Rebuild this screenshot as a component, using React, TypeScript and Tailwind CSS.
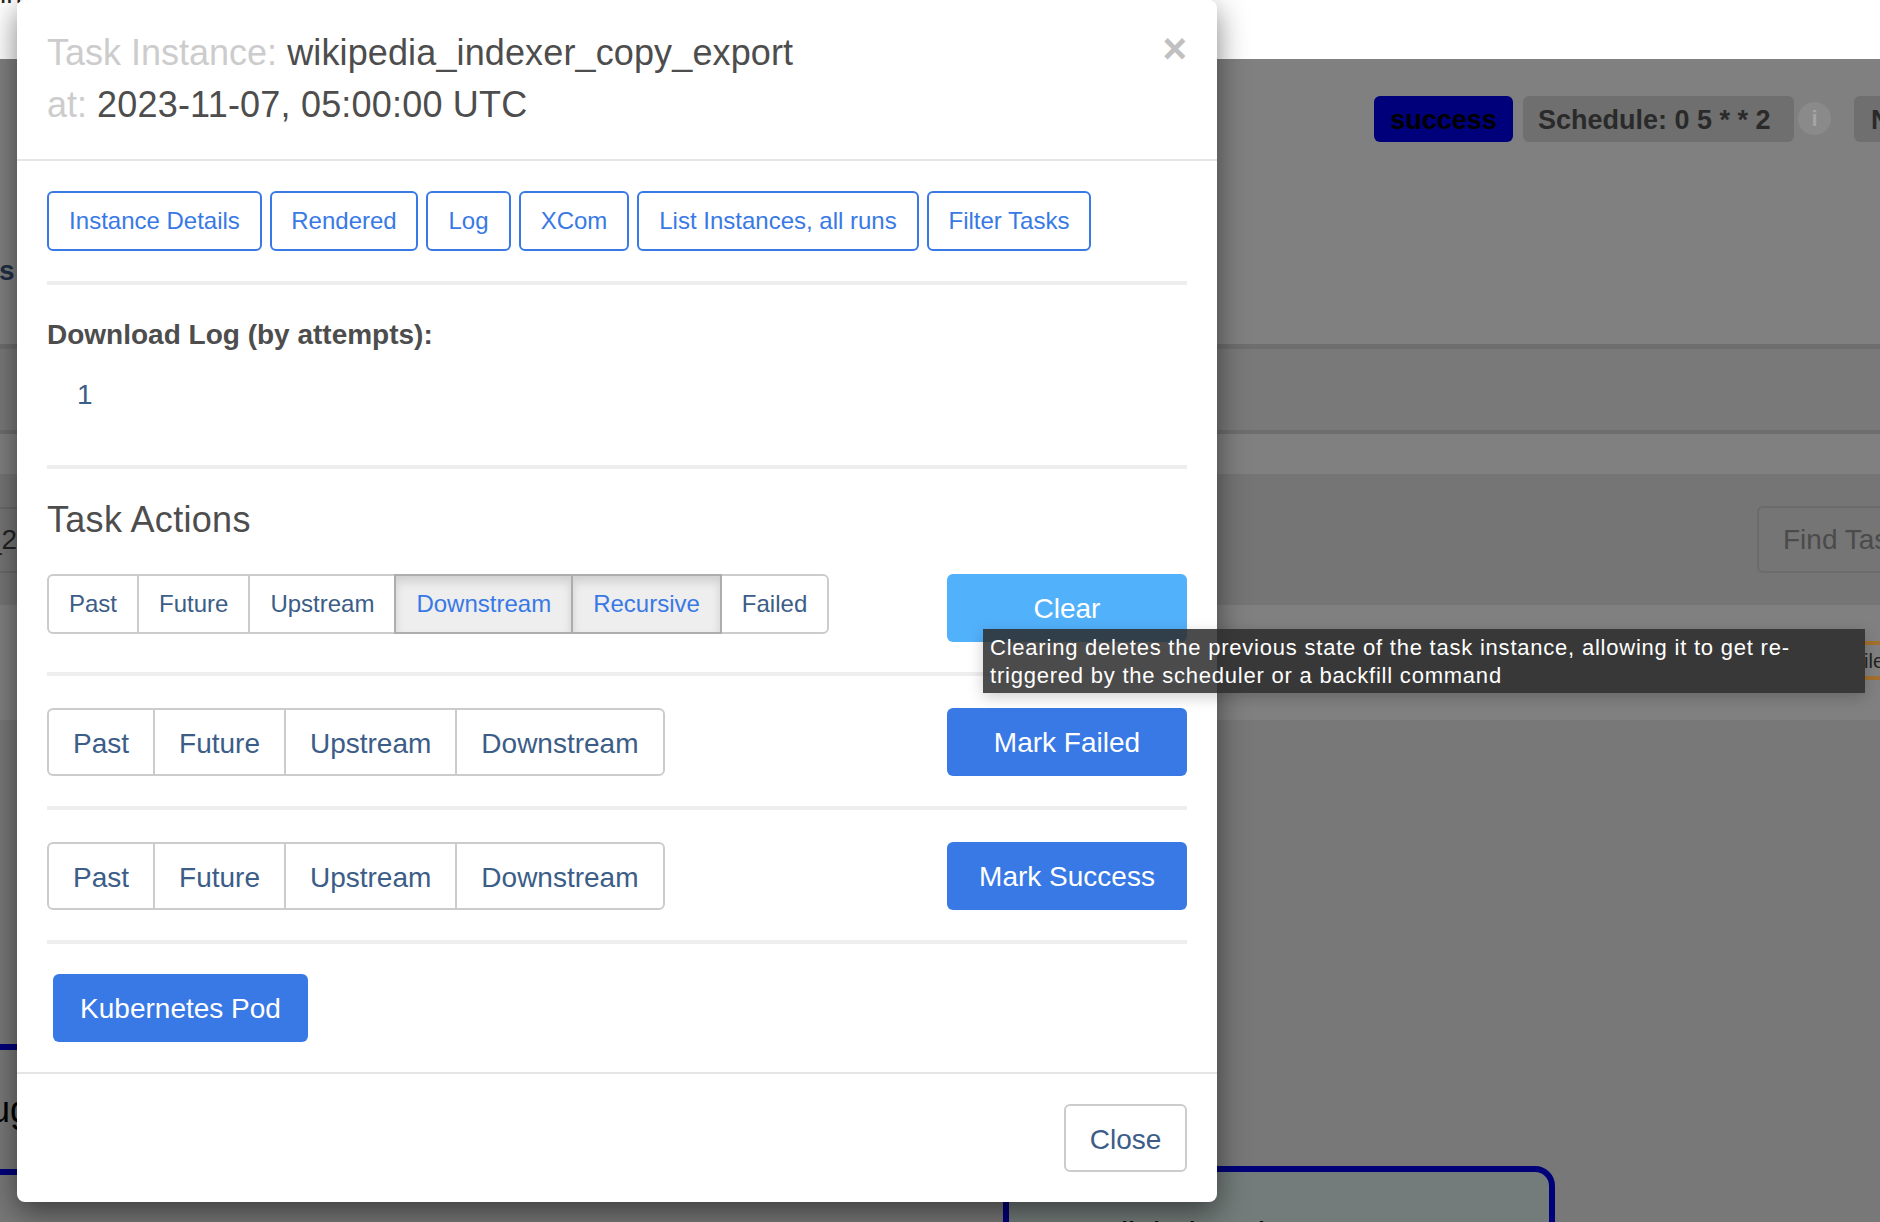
import React from "react";

const font = { fontFamily: '"Liberation Sans", Arial, sans-serif' };

function Hr({ className = "" }: { className?: string }) {
  return <div className={`h-1 bg-[#eeeeee] ${className}`} />;
}

type Seg = { label: string; active?: boolean };

function Group({ items, large }: { items: Seg[]; large?: boolean }) {
  const size = large ? "h-[68px] px-6 pt-[3px] text-[28px]" : "h-[60px] px-5 text-[24px]";
  return (
    <div className="flex">
      {items.map((it, i) => {
        const first = i === 0;
        const last = i === items.length - 1;
        return (
          <button
            key={it.label}
            className={`${size} relative border-2 leading-none ${first ? "rounded-l-md" : "-ml-0.5"} ${last ? "rounded-r-md" : ""} ${
              it.active
                ? "z-10 border-[#adadad] bg-[#eeeeee] text-[#3879e6] shadow-[inset_0_6px_10px_rgba(0,0,0,0.125)]"
                : "border-[#cccccc] bg-white text-[#3b5d87]"
            }`}
          >
            {it.label}
          </button>
        );
      })}
    </div>
  );
}

function Tab({ label, className }: { label: string; className: string }) {
  return (
    <button className={`h-[60px] rounded-md border-2 border-[#3879e6] bg-white text-[24px] leading-none text-[#3879e6] ${className}`}>
      {label}
    </button>
  );
}

function Primary({ label, className = "" }: { label: string; className?: string }) {
  return (
    <button className={`h-[68px] rounded-md bg-[#3879e6] pt-[2px] text-[28px] leading-none text-white ${className}`}>
      {label}
    </button>
  );
}

function Background() {
  return (
    <div className="flex h-[1222px] flex-col">
      <div className="h-[59px] overflow-hidden bg-white">
        <div className="-mt-[22px] text-[28px] leading-[32px] text-[#222222]">in</div>
      </div>
      <div className="flex h-[285px] justify-between bg-[#808080]">
        <div className="-ml-px mt-[196px] text-[28px] font-bold leading-8 text-[#1f2f45]">s</div>
        <div className="-mr-[40px] mt-[37px] flex h-[46px] items-start gap-[10px] text-[27px] font-bold leading-[48px]">
          <div className="h-[46px] w-[139px] rounded-md bg-[#00007a] text-center text-black">success</div>
          <div className="h-[46px] w-[271px] rounded-md bg-[#6f6f6f] pl-[15px] text-[#2a2a2a]">Schedule: 0 5 * * 2</div>
          <div className="-ml-[6px] mt-[6px] flex h-[33px] w-[33px] items-center justify-center rounded-full bg-[#8a8a8a] text-[22px] font-bold leading-none text-[#a5a5a5]">
            i
          </div>
          <div className="ml-[13px] h-[46px] w-[66px] rounded-md bg-[#6f6f6f] pl-[17px] text-[#2a2a2a]">N</div>
        </div>
      </div>
      <div className="h-[5px] bg-[#6e6e6e]" />
      <div className="h-[81px] bg-[#797979]" />
      <div className="h-1 bg-[#6e6e6e]" />
      <div className="h-10 bg-[#808080]" />
      <div className="flex h-[131px] items-center justify-between bg-[#757575]">
        <div className="-ml-[14px] flex h-[66px] w-[40px] items-center border-y-2 border-[#6a6a6a] text-[28px] text-[#222222]">
          _2
        </div>
        <div className="-mr-[20px] flex h-[67px] w-[143px] items-center overflow-hidden whitespace-nowrap rounded-md border-2 border-[#6b6b6b] pl-[24px] pt-[1px] text-[28px] text-[#4b4b4b]">
          Find Task
        </div>
      </div>
      <div className="h-[115px] bg-[#808080]" />
      <div className="relative flex-1 bg-[#787878]">
        <div className="absolute -left-[20px] top-[324px] flex h-[131px] w-[50px] items-center justify-end border-y-[6px] border-[#00007a] text-[36px] text-black">
          ug
        </div>
        <div className="absolute left-[1003px] top-[446px] h-[100px] w-[552px] rounded-t-[20px] border-[6px] border-[#00007a] bg-[#737c7a] pl-[112px] pt-[43px] text-[32px] leading-9 text-black">
          ll_index_data
        </div>
      </div>
    </div>
  );
}

export default function App() {
  const top: Seg[] = [
    { label: "Past" },
    { label: "Future" },
    { label: "Upstream" },
    { label: "Downstream", active: true },
    { label: "Recursive", active: true },
    { label: "Failed" },
  ];
  const rest: Seg[] = [{ label: "Past" }, { label: "Future" }, { label: "Upstream" }, { label: "Downstream" }];
  return (
    <div className="relative h-[1222px] w-[1880px] overflow-hidden" style={font}>
      <Background />

      <div className="absolute right-0 top-[641px] flex h-[39px] w-4 items-center overflow-hidden whitespace-nowrap border-y-4 border-[#a3702c] bg-[#808080] text-[20px] text-[#222222]">
        iled
      </div>

      <div className="absolute left-[17px] top-0 flex h-[1202px] w-[1200px] flex-col rounded-lg bg-white shadow-[0_10px_30px_rgba(0,0,0,0.5)]">
        <div className="relative h-[161px] border-b-2 border-[#e5e5e5] px-[30px] pt-[27px] text-[36px] leading-[52px] text-[#4d4d4d]">
          <div>
            <span className="text-[#cccccc]">Task Instance:</span> <span className="tracking-[0.13px]">wikipedia_indexer_copy_export</span>
          </div>
          <div>
            <span className="text-[#cccccc]">at:</span> <span className="tracking-[0.2px]">2023-11-07, 05:00:00 UTC</span>
          </div>
          <button className="absolute right-[30px] top-[28px] text-[42px] font-bold leading-none text-[#c0c0c0]">×</button>
        </div>

        <div className="flex flex-1 flex-col px-[30px] pt-[30px]">
          <div className="flex gap-2">
            <Tab label="Instance Details" className="w-[215px]" />
            <Tab label="Rendered" className="w-[148px]" />
            <Tab label="Log" className="w-[85px]" />
            <Tab label="XCom" className="w-[110px]" />
            <Tab label="List Instances, all runs" className="w-[282px]" />
            <Tab label="Filter Tasks" className="w-[164px]" />
          </div>
          <Hr className="mt-[30px]" />
          <div className="mt-[34px] text-[28px] font-bold leading-8 text-[#4d4d4d]">Download Log (by attempts):</div>
          <div className="mt-[28px] pl-[30px] text-[28px] leading-8 text-[#3b5d87]">1</div>
          <Hr className="mt-[54px]" />
          <div className="mt-[31px] text-[36px] leading-10 tracking-[0.3px] text-[#4d4d4d]">Task Actions</div>

          <div className="mt-[34px] flex items-start justify-between">
            <Group items={top} />
            <button className="h-[68px] w-60 rounded-md bg-[#52b1fb] pt-[2px] text-[28px] leading-none text-white">Clear</button>
          </div>
          <Hr className="mt-[30px]" />
          <div className="mt-8 flex items-start justify-between">
            <Group items={rest} large />
            <Primary label="Mark Failed" className="w-60" />
          </div>
          <Hr className="mt-[30px]" />
          <div className="mt-8 flex items-start justify-between">
            <Group items={rest} large />
            <Primary label="Mark Success" className="w-60" />
          </div>
          <Hr className="mt-[30px]" />
          <div className="mt-[30px] pl-[6px]">
            <Primary label="Kubernetes Pod" className="w-[255px]" />
          </div>
        </div>

        <div className="flex h-[130px] items-start justify-end border-t-2 border-[#e5e5e5] px-[30px] pt-[30px]">
          <button className="h-[68px] w-[123px] rounded-md border-2 border-[#cccccc] bg-white pt-[3px] text-[28px] leading-none text-[#3b5d87]">
            Close
          </button>
        </div>
      </div>

      <div className="absolute left-[983px] top-[629px] h-16 w-[882px] bg-[rgba(43,43,43,0.85)] px-[7px] pt-[5px] text-[22px] leading-[28px] tracking-[0.78px] text-white shadow-[0_4px_14px_rgba(0,0,0,0.2)]">
        Clearing deletes the previous state of the task instance, allowing it to get re-
        <br />
        triggered by the scheduler or a backfill command
      </div>
    </div>
  );
}
